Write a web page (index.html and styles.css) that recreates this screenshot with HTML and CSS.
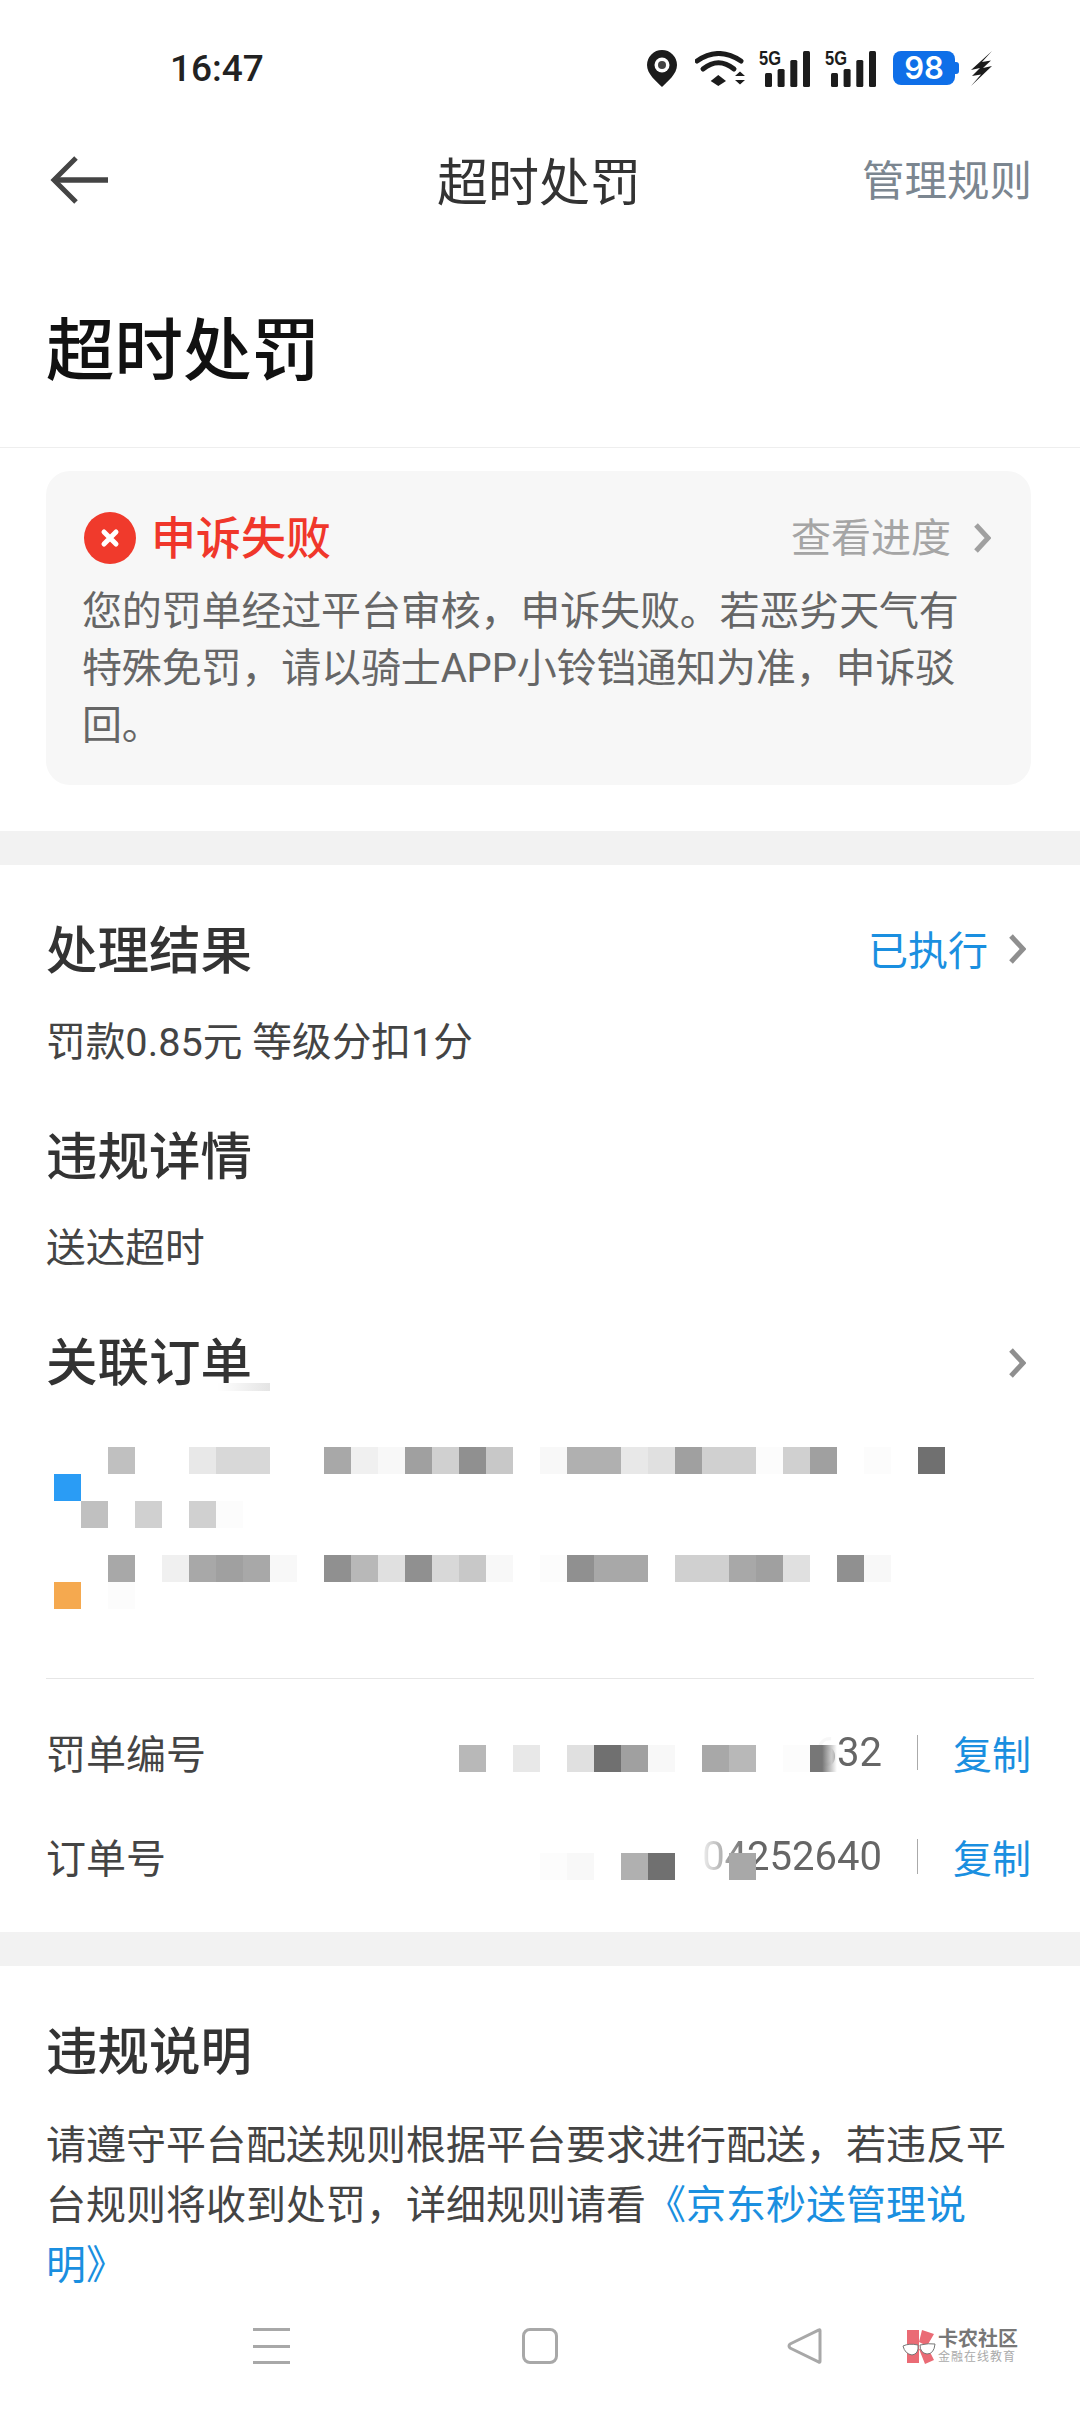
FILE: index.html
```html
<!DOCTYPE html>
<html lang="zh-CN">
<head>
  <meta charset="UTF-8">
  <meta name="viewport" content="width=device-width, initial-scale=1.0">
  <title>超时处罚</title>
  <link rel="stylesheet" href="styles.css">
</head>
<body>
  <!-- Status bar -->
  <div class="status-bar">
    <span class="status-time">16:47</span>
    <div class="status-icons">
      <svg class="icon-pin" width="30" height="37" viewBox="0 0 30 37">
        <path d="M15 0A15 15 0 0 1 30 15C30 24 21 31 15 37C9 31 0 24 0 15A15 15 0 0 1 15 0Z" fill="#1c1c1c"/>
        <circle cx="15" cy="15" r="7.5" fill="#fff"/>
        <circle cx="15" cy="15" r="4" fill="#444"/>
      </svg>
      <svg class="icon-wifi" width="52" height="35" viewBox="0 0 52 35">
        <path d="M2 10Q23.5 -5 46 10" fill="none" stroke="#1c1c1c" stroke-width="5" stroke-linecap="round"/>
        <path d="M8 18Q23.5 5.5 39 18" fill="none" stroke="#1c1c1c" stroke-width="5" stroke-linecap="round"/>
        <path d="M23.3 24L31 30L23.3 35L15.7 30Z" fill="#1c1c1c"/>
        <path d="M40 25H50L45 20.5ZM40 29H50L45 33.5Z" fill="#1c1c1c"/>
      </svg>
      <svg class="icon-signal" width="52" height="37" viewBox="0 0 52 37">
        <text class="signal-label" x="0" y="15" textLength="22" lengthAdjust="spacingAndGlyphs">5G</text>
        <rect x="6" y="23" width="7" height="14" rx="1.5" fill="#1c1c1c"/>
        <rect x="18.6" y="19" width="7" height="18" rx="1.5" fill="#1c1c1c"/>
        <rect x="31.3" y="10" width="7" height="27" rx="1.5" fill="#1c1c1c"/>
        <rect x="44" y="1" width="7" height="36" rx="1.5" fill="#1c1c1c"/>
      </svg>
      <svg class="icon-signal" width="52" height="37" viewBox="0 0 52 37">
        <text class="signal-label" x="0" y="15" textLength="22" lengthAdjust="spacingAndGlyphs">5G</text>
        <rect x="6" y="23" width="7" height="14" rx="1.5" fill="#1c1c1c"/>
        <rect x="18.6" y="19" width="7" height="18" rx="1.5" fill="#1c1c1c"/>
        <rect x="31.3" y="10" width="7" height="27" rx="1.5" fill="#1c1c1c"/>
        <rect x="44" y="1" width="7" height="36" rx="1.5" fill="#1c1c1c"/>
      </svg>
      <div class="battery"><span>98</span></div>
      <svg class="icon-bolt" width="21" height="35" viewBox="0 0 21 35">
        <path d="M21 0L0 19L9 17L1 25L10 23.5L0 35L21 15L12 17L20 9.5L11 11Z" fill="#1c1c1c"/>
      </svg>
    </div>
  </div>

  <!-- Nav -->
  <div class="nav-bar">
    <svg class="back-arrow" width="58" height="48" viewBox="0 0 58 48">
      <path d="M58 24H4" fill="none" stroke="#444" stroke-width="5.5"/>
      <path d="M26 2L4 24L26 46" fill="none" stroke="#444" stroke-width="5"/>
    </svg>
    <div class="nav-title">超时处罚</div>
    <div class="nav-action">管理规则</div>
  </div>

  <div class="page-head">
    <h1>超时处罚</h1>
  </div>

  <!-- Appeal result -->
  <div class="appeal-card">
    <div class="appeal-top">
      <svg class="appeal-icon" width="52" height="52" viewBox="0 0 52 52">
        <circle cx="26" cy="26" r="26" fill="#f03a2c"/>
        <path d="M20 20L32 32M32 20L20 32" stroke="#fff" stroke-width="5" stroke-linecap="round"/>
      </svg>
      <span class="appeal-state">申诉失败</span>
      <span class="appeal-link">查看进度</span>
      <svg class="chevron chevron-card" width="18" height="30" viewBox="0 0 18 30">
        <path d="M3 2L15 15L3 28" fill="none" stroke="#a0a0a0" stroke-width="5"/>
      </svg>
    </div>
    <p class="appeal-text">您的罚单经过平台审核，申诉失败。若恶劣天气有特殊免罚，请以骑士APP小铃铛通知为准，申诉驳回。</p>
  </div>

  <div class="band"></div>

  <section class="section section-detail">
    <div class="head-row">
      <h2>处理结果</h2>
      <span class="done">已执行</span>
      <svg class="chevron" width="18" height="30" viewBox="0 0 18 30">
        <path d="M3 2L15 15L3 28" fill="none" stroke="#8f8f8f" stroke-width="5"/>
      </svg>
    </div>
    <p class="line">罚款0.85元 等级分扣1分</p>

    <div class="head-row head-gap">
      <h2>违规详情</h2>
    </div>
    <p class="line">送达超时</p>

    <div class="head-row head-gap head-order">
      <h2>关联订单</h2>
      <i class="title-smear"></i>
      <svg class="chevron chevron-end" width="18" height="30" viewBox="0 0 18 30">
        <path d="M3 2L15 15L3 28" fill="none" stroke="#8f8f8f" stroke-width="5"/>
      </svg>
    </div>

    <!-- pixelated order addresses -->
    <div class="mosaic">
      <div class="mosaic-row"><i></i><i></i><i class="gc0"></i><i></i><i></i><i class="ge8"></i><i class="gd8"></i><i class="gd8"></i><i></i><i></i><i class="ga8"></i><i class="gf0"></i><i class="gf8"></i><i class="ga0"></i><i class="gd0"></i><i class="g90"></i><i class="gc8"></i><i></i><i class="gf8"></i><i class="gb0"></i><i class="gb0"></i><i class="ge8"></i><i class="ge0"></i><i class="ga0"></i><i class="gd0"></i><i class="gd0"></i><i class="gfc"></i><i class="gd0"></i><i class="ga0"></i><i></i><i class="gfc"></i><i></i><i class="g70"></i></div>
      <div class="mosaic-row"><i class="dot-blue"></i></div>
      <div class="mosaic-row"><i></i><i class="gc0"></i><i></i><i class="gd0"></i><i></i><i class="gd0"></i><i class="gfc"></i></div>
      <div class="mosaic-row"></div>
      <div class="mosaic-row"><i></i><i></i><i class="ga8"></i><i></i><i class="gf0"></i><i class="ga8"></i><i class="ga0"></i><i class="ga8"></i><i class="gf8"></i><i></i><i class="g90"></i><i class="gb8"></i><i class="ge0"></i><i class="g90"></i><i class="gd8"></i><i class="gc8"></i><i class="gf8"></i><i></i><i class="gfc"></i><i class="g90"></i><i class="ga8"></i><i class="ga8"></i><i></i><i class="gd0"></i><i class="gd0"></i><i class="ga8"></i><i class="ga0"></i><i class="ge0"></i><i></i><i class="g90"></i><i class="gf8"></i></div>
      <div class="mosaic-row"><i class="dot-orange"></i><i></i><i class="gfc"></i></div>
    </div>

    <div class="divider"></div>

    <div class="id-row">
      <span class="id-label">罚单编号</span>
      <span class="id-value id-value-short">632</span>
      <span class="id-sep"></span>
      <span class="id-copy">复制</span>
      <div class="mosaic-row id-cover id-cover-a"><i></i><i></i><i></i><i></i><i></i><i></i><i></i><i></i><i></i><i></i><i></i><i></i><i></i><i></i><i></i><i class="gb8"></i><i></i><i class="ge8"></i><i></i><i class="ge0"></i><i class="g70"></i><i class="ga0"></i><i class="gf8"></i><i></i><i class="ga8"></i><i class="gb8"></i><i></i><i class="gfc"></i><i class="fade"></i></div>
    </div>
    <div class="id-row id-row-next">
      <span class="id-label">订单号</span>
      <span class="id-value id-value-fade">04252640</span>
      <span class="id-sep"></span>
      <span class="id-copy">复制</span>
      <div class="mosaic-row id-cover id-cover-b"><i></i><i></i><i></i><i></i><i></i><i></i><i></i><i></i><i></i><i></i><i></i><i></i><i></i><i></i><i></i><i></i><i></i><i></i><i class="gfc"></i><i class="gf8"></i><i></i><i class="gb0"></i><i class="g70"></i><i></i><i></i><i class="ga8"></i></div>
    </div>
  </section>

  <div class="band"></div>

  <section class="section section-rule">
    <h2>违规说明</h2>
    <p class="rule-text">请遵守平台配送规则根据平台要求进行配送，若违反平台规则将收到处罚，详细规则请看<span class="rule-link">《京东秒送管理说<br>明》</span></p>
  </section>

  <!-- System nav -->
  <div class="sys-nav">
    <div class="sys-menu"><i></i><i></i><i></i></div>
    <div class="sys-home"></div>
    <svg class="sys-back" width="36" height="36" viewBox="0 0 36 36">
      <path d="M33 2.5V33.5Q33 35 31.5 33.8L3 20Q1 18 3 16L31.5 2.2Q33 1 33 2.5Z" fill="none" stroke="#a8a8a8" stroke-width="3" stroke-linejoin="round"/>
    </svg>
    <div class="logo">
      <svg width="35" height="35" viewBox="0 0 35 35">
        <rect x="5" y="1" width="12" height="33" fill="#ea6b75"/>
        <path d="M20 1L32 5L25 17L17 13ZM17 20L25 17L32 31L23 35Z" fill="#ea6b75"/>
        <path d="M1 17Q7 14 16 16Q17 25 10 26Q3 25 1 17ZM18 16Q27 14 33 15Q32 25 25 25Q18 24 18 16Z" fill="#fff" stroke="#777" stroke-width="1"/>
      </svg>
      <div class="logo-text">
        <span class="logo-name">卡农社区</span>
        <span class="logo-sub">金融在线教育</span>
      </div>
    </div>
  </div>
</body>
</html>
```

FILE: styles.css
```css
* {
  box-sizing: border-box;
}

body {
  margin: 0;
  width: 1080px;
  height: 2412px;
  overflow: hidden;
  background-color: #fff;
  font-family: Roboto, "Noto Sans CJK SC", sans-serif;
  color: #333;
}

h1, h2, p {
  margin: 0;
  font-weight: 400;
}

/* Status bar */
.status-bar {
  display: flex;
  align-items: center;
  height: 136px;
  padding-left: 170px;
}

.status-time {
  font-size: 37px;
  font-weight: 500;
  color: #222;
  width: 477px;
}

.status-icons {
  display: flex;
  align-items: center;
}

.icon-wifi {
  margin-left: 18px;
}

.icon-signal {
  margin-left: 12px;
  overflow: visible;
}

.icon-signal + .icon-signal {
  margin-left: 14px;
}

.signal-label {
  font-family: "Liberation Sans", sans-serif;
  font-size: 20px;
  font-weight: 700;
  fill: #1c1c1c;
}

.battery {
  position: relative;
  width: 62px;
  height: 34px;
  margin-left: 16px;
  border-radius: 8px;
  background-color: #0f6fe8;
  color: #fff;
  font-family: Inter, sans-serif;
  font-size: 31px;
  font-weight: 600;
  line-height: 34px;
  text-align: center;
}

.battery::after {
  content: "";
  position: absolute;
  right: -4px;
  top: 11px;
  width: 4px;
  height: 12px;
  border-radius: 0 3px 3px 0;
  background-color: #0f6fe8;
}

.icon-bolt {
  margin-left: 16px;
}

/* Nav bar */
.nav-bar {
  display: flex;
  align-items: center;
  height: 88px;
  padding: 0 48px 0 50px;
}

.nav-title {
  margin: 0 0 3px 329px;
  font-size: 51px;
  color: #333;
}

.nav-action {
  margin: 0 0 6px auto;
  font-size: 42.5px;
  color: #7b8690;
}

.page-head {
  height: 224px;
  padding: 88px 46px 0;
  border-bottom: 1px solid #eee;
}

.page-head h1 {
  font-size: 68.5px;
  font-weight: 500;
  line-height: 80px;
  color: #111;
}

/* Appeal card */
.appeal-card {
  height: 314px;
  margin: 23px 49px 46px 46px;
  padding: 39px 37px 0 36px;
  border-radius: 24px;
  background-color: #f7f7f7;
}

.appeal-top {
  display: flex;
  align-items: center;
  height: 56px;
}

.appeal-icon {
  margin-left: 2px;
}

.appeal-state {
  margin: 0 0 6px 15px;
  font-size: 45px;
  font-weight: 500;
  color: #f0372b;
}

.appeal-link {
  margin: 0 0 6px auto;
  font-size: 40px;
  color: #a5a5a5;
}

.chevron-card {
  margin-left: 22px;
  margin-right: 3px;
}

.appeal-text {
  margin-top: 17px;
  font-size: 40px;
  line-height: 57px;
  letter-spacing: -0.15px;
  color: #666;
}

.band {
  height: 34px;
  background-color: #f2f2f2;
}

/* Sections */
.section {
  position: relative;
  padding: 0 46px;
}

.section h2 {
  padding-top: 6px;
  font-size: 51.5px;
  font-weight: 500;
  line-height: 62px;
  color: #333;
}

.section-detail {
  padding-top: 50px;
  padding-bottom: 42px;
}

.head-row {
  display: flex;
  align-items: center;
  height: 68px;
}

.head-gap {
  margin-top: 48px;
}

.head-order {
  position: relative;
}

.title-smear {
  position: absolute;
  left: 171px;
  top: 56px;
  width: 53px;
  height: 8px;
  background: linear-gradient(90deg, #fff, #e4e4e4);
}

.done {
  margin: 0 0 3px auto;
  font-size: 40px;
  color: #1a8fe0;
}

.chevron {
  flex: none;
}

.head-row .chevron {
  margin-left: 20px;
  margin-right: 8px;
}

.head-row .chevron-end {
  margin-left: auto;
  margin-top: 4px;
}

.line {
  margin-top: 30px;
  font-size: 39.7px;
  line-height: 60px;
  color: #444;
}

.mosaic {
  margin: 52px 0 0 8px;
}

.mosaic-row {
  display: flex;
  height: 27px;
}

.mosaic-row i {
  flex: none;
  width: 27px;
  height: 100%;
}

.dot-blue { background-color: #2a9cf5; }
.dot-orange { background-color: #f5a94f; }
.g70 { background-color: #707070; }
.g90 { background-color: #909090; }
.ga0 { background-color: #a0a0a0; }
.ga8 { background-color: #a8a8a8; }
.gb0 { background-color: #b0b0b0; }
.gb8 { background-color: #b8b8b8; }
.gc0 { background-color: #c0c0c0; }
.gc8 { background-color: #c8c8c8; }
.gd0 { background-color: #d0d0d0; }
.gd8 { background-color: #d8d8d8; }
.ge0 { background-color: #e0e0e0; }
.ge8 { background-color: #e8e8e8; }
.gf0 { background-color: #f0f0f0; }
.gf8 { background-color: #f8f8f8; }
.gfc { background-color: #fcfcfc; }
.fade { background: linear-gradient(90deg, #777 45%, rgba(255, 255, 255, 0)); }

.divider {
  height: 1px;
  margin-top: 69px;
  background-color: #e6e6e6;
}

.id-row {
  position: relative;
  display: flex;
  align-items: center;
  height: 68px;
  margin-top: 39px;
  font-size: 40px;
}

.id-row-next {
  margin-top: 36px;
}

.id-label {
  color: #444;
}

.id-value {
  margin-left: auto;
  color: #666;
}

.id-value-short {
  -webkit-mask-image: linear-gradient(90deg, rgba(0, 0, 0, 0.05) 25%, #000 36%);
  mask-image: linear-gradient(90deg, rgba(0, 0, 0, 0.05) 25%, #000 36%);
}

.id-value-fade {
  -webkit-mask-image: linear-gradient(90deg, rgba(0, 0, 0, 0.1), #000 25%);
  mask-image: linear-gradient(90deg, rgba(0, 0, 0, 0.1), #000 25%);
}

.id-sep {
  width: 1px;
  height: 35px;
  margin: 0 35px;
  background-color: #aaa;
}

.id-copy {
  margin-right: 3px;
  font-size: 39px;
  color: #1a8fe0;
}

.id-cover {
  position: absolute;
  left: 8px;
}

.id-cover-a {
  top: 27px;
}

.id-cover-b {
  top: 31px;
}

.section-rule {
  padding-top: 50px;
}

.rule-text {
  margin-top: 32px;
  font-size: 40px;
  line-height: 60px;
  color: #444;
}

.rule-link {
  color: #1a8fe0;
}

/* System nav */
.sys-nav {
  display: flex;
  align-items: center;
  height: 68px;
  margin-top: 16px;
  padding-left: 253px;
}

.sys-menu {
  display: flex;
  flex-direction: column;
  justify-content: space-between;
  width: 37px;
  height: 36px;
}

.sys-menu i {
  height: 3px;
  background-color: #a8a8a8;
}

.sys-home {
  width: 36px;
  height: 36px;
  margin-left: 232px;
  border: 3px solid #a8a8a8;
  border-radius: 8px;
}

.sys-back {
  margin-left: 229px;
}

.logo {
  display: flex;
  align-items: center;
  margin-left: 79px;
}

.logo-text {
  display: flex;
  flex-direction: column;
  margin-left: 1px;
}

.logo-name {
  font-size: 20px;
  font-weight: 700;
  line-height: 22px;
  color: #777;
}

.logo-sub {
  font-size: 12px;
  line-height: 15px;
  letter-spacing: 1px;
  color: #aaa;
}
```
